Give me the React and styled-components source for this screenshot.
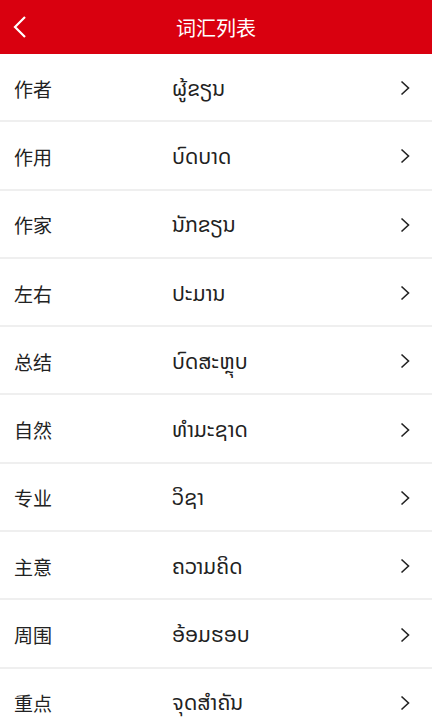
import styled, { createGlobalStyle } from "styled-components";

const words = [
    { zh: "作者", lo: "ຜູ້ຂຽນ" },
    { zh: "作用", lo: "ບົດບາດ" },
    { zh: "作家", lo: "ນັກຂຽນ" },
    { zh: "左右", lo: "ປະມານ" },
    { zh: "总结", lo: "ບົດສະຫຼຸບ" },
    { zh: "自然", lo: "ທຳມະຊາດ" },
    { zh: "专业", lo: "ວິຊາ" },
    { zh: "主意", lo: "ຄວາມຄິດ" },
    { zh: "周围", lo: "ອ້ອມຮອບ" },
    { zh: "重点", lo: "ຈຸດສຳຄັນ" },
];

const App = () => {
    return (
        <>
            <GlobalStyle />
            <Page>
                <Header>
                    <Back>
                        <svg width="16" height="24" viewBox="0 0 16 24">
                            <path d="M13 2 L3 12 L13 22" fill="none" stroke="#fff" strokeWidth="2.2" />
                        </svg>
                    </Back>
                    <Title>词汇列表</Title>
                </Header>
                <List>
                    {words.map((w) => (
                        <Row key={w.zh}>
                            <Word>{w.zh}</Word>
                            <Meaning>{w.lo}</Meaning>
                            <Chevron>
                                <svg width="10" height="16" viewBox="0 0 10 16">
                                    <path d="M1.5 1.5 L8.5 8 L1.5 14.5" fill="none" stroke="#222" strokeWidth="1.6" />
                                </svg>
                            </Chevron>
                        </Row>
                    ))}
                </List>
            </Page>
        </>
    );
}

export default App;

const GlobalStyle = createGlobalStyle`
    body {
        margin: 0;
        background: #fff;
        font-family: "Noto Sans", "Noto Sans CJK SC", "DejaVu Sans", sans-serif;
    }
`;

const Page = styled.div`
    width: 432px;
    height: 720px;
    overflow: hidden;
    display: flex;
    flex-direction: column;
`;

const Header = styled.div`
    height: 54px;
    flex-shrink: 0;
    background-color: #d9000f;
    display: flex;
    align-items: center;
    justify-content: center;
    position: relative;
`;

const Back = styled.div`
    position: absolute;
    left: 12px;
    top: 15px;
    display: flex;
`;

const Title = styled.div`
    color: #fff;
    font-size: 20px;
    font-family: "Noto Sans CJK SC", sans-serif;
`;

const List = styled.div`
    display: flex;
    flex-direction: column;
`;

const Row = styled.div`
    height: 66.3px;
    flex-shrink: 0;
    display: flex;
    align-items: center;
    padding: 2px 22px 0 14px;
    box-sizing: border-box;
    height: 68.3px;
    border-bottom: 2px solid #efefef;
`;

const Word = styled.div`
    width: 158px;
    font-size: 19px;
    color: #222;
    font-family: "Noto Sans CJK SC", sans-serif;
`;

const Meaning = styled.div`
    flex: 1;
    font-size: 21px;
    color: #222;
    font-family: "Noto Sans Lao", "DejaVu Sans", "Noto Sans", sans-serif;
`;

const Chevron = styled.div`
    display: flex;
`;
